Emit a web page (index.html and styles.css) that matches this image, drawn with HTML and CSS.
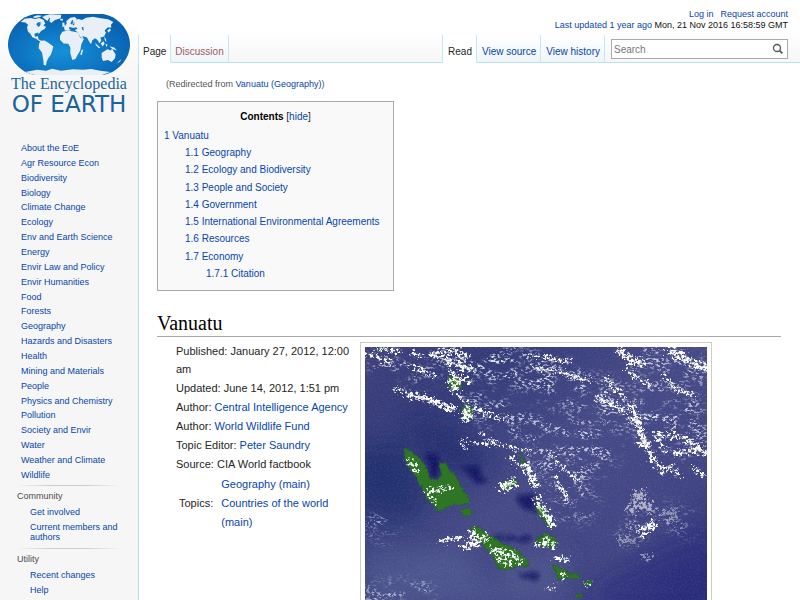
FILE: index.html
```
<!DOCTYPE html>
<html lang="en">
<head>
    <meta charset="UTF-8">
    <title>Vanuatu - The Encyclopedia of Earth</title>
    <link rel="stylesheet" href="styles.css">
</head>
<body>

<div class="page">

    <aside class="sidebar">
        <a class="logo" href="#">
            <svg class="globe" viewBox="24 42 366 182" preserveAspectRatio="none" aria-hidden="true">
                <defs>
                    <radialGradient id="sea" cx="45%" cy="62%" r="60%">
                        <stop offset="0" stop-color="#1591d8"/>
                        <stop offset="1" stop-color="#0862b2"/>
                    </radialGradient>
                    <clipPath id="globeShape">
                        <path d="M105 42H308C350 47 390 88 390 133S350 219 308 224H105C64 219 24 178 24 133S64 47 105 42Z"/>
                    </clipPath>
                </defs>
                <g clip-path="url(#globeShape)">
                    <rect x="24" y="42" width="366" height="182" fill="url(#sea)"/>
                    <g fill="#e9eff6">
                        <path d="M62 66L74 56 92 54 105 57 118 54 131 60 136 70 130 76 138 80 134 87 124 92 116 102 114 97 103 101 105 110 113 108 116 118 124 122 119 123 108 116 97 111 91 101 84 94 81 82 84 74 76 67Z"/>
                        <path d="M98 51L112 46 126 47 118 52 104 54ZM126 50L140 47 148 54 142 63 134 57Z"/>
                        <path d="M130 48L150 43 184 44 182 55 165 60 154 69 148 64 150 54Z"/>
                        <path d="M121 122L134 121 147 129 160 139 157 151 152 164 145 173 140 184 138 196 131 194 130 180 126 157 116 144 117 132Z"/>
                        <path d="M192 81L200 71 199 63 211 53 224 51 231 57 224 66 217 75 226 76 226 83 216 83 209 80 207 87 214 90 205 92 194 91Z"/>
                        <path d="M187 95L204 91 219 94 234 97 241 113 252 116 244 132 241 150 234 162 226 176 217 179 211 159 211 142 205 131 191 130 180 119 180 107Z"/>
                        <path d="M224 61L235 57 246 60 258 53 279 50 298 54 324 58 340 66 333 74 334 82 323 82 314 91 318 98 312 109 301 112 304 121 298 129 292 119 285 114 277 120 273 132 266 122 261 112 247 108 250 116 242 111 232 96 225 91 231 84 222 79Z"/>
                        <path d="M305 158L316 151 323 147 332 151 336 146 347 163 345 174 335 185 324 179 309 182 305 172Z"/>
                        <path d="M285 128L293 135 301 143 297 144 289 137ZM302 130L310 123 314 130 308 139ZM317 132L323 132 319 141ZM328 138L342 142 351 150 338 147ZM313 108L318 118 319 126 314 119ZM322 91L329 85 333 90 325 98ZM353 187L364 176 360 184 348 191ZM244 151L250 147 245 165 241 163ZM187 67L193 68 195 80 187 80ZM180 57L189 56 188 62 181 61Z"/>
                        <path d="M75 215L112 208 139 211 156 205 183 211 219 207 249 208 274 206 301 211 331 215 304 225H104Z"/>
                    </g>
                    <g fill="#1779c5">
                        <path d="M111 68L122 66 121 76 116 81 109 74ZM215 62L219 59 220 69 214 73 211 70ZM221 84L230 83 233 87 223 88ZM245 82L250 80 251 91 247 90Z"/>
                    </g>
                </g>
            </svg>
            <span class="logo-top">The Encyclopedia</span>
            <span class="logo-bottom">OF EARTH</span>
        </a>

        <nav>
            <ul class="nav-main">
                <li><a href="#">About the EoE</a></li>
                <li><a href="#">Agr Resource Econ</a></li>
                <li><a href="#">Biodiversity</a></li>
                <li><a href="#">Biology</a></li>
                <li><a href="#">Climate Change</a></li>
                <li><a href="#">Ecology</a></li>
                <li><a href="#">Env and Earth Science</a></li>
                <li><a href="#">Energy</a></li>
                <li><a href="#">Envir Law and Policy</a></li>
                <li><a href="#">Envir Humanities</a></li>
                <li><a href="#">Food</a></li>
                <li><a href="#">Forests</a></li>
                <li><a href="#">Geography</a></li>
                <li><a href="#">Hazards and Disasters</a></li>
                <li><a href="#">Health</a></li>
                <li><a href="#">Mining and Materials</a></li>
                <li><a href="#">People</a></li>
                <li><a href="#">Physics and Chemistry</a></li>
                <li><a href="#">Pollution</a></li>
                <li><a href="#">Society and Envir</a></li>
                <li><a href="#">Water</a></li>
                <li><a href="#">Weather and Climate</a></li>
                <li><a href="#">Wildlife</a></li>
            </ul>

            <div class="portal">
                <h3>Community</h3>
                <ul>
                    <li><a href="#">Get involved</a></li>
                    <li><a href="#">Current members and authors</a></li>
                </ul>
            </div>

            <div class="portal">
                <h3>Utility</h3>
                <ul>
                    <li><a href="#">Recent changes</a></li>
                    <li><a href="#">Help</a></li>
                </ul>
            </div>
        </nav>
    </aside>

    <div class="main">
        <header class="header">
            <div class="personal">
                <div class="account"><a href="#">Log in</a><a href="#">Request account</a></div>
                <div><a href="#">Last updated 1 year ago</a> Mon, 21 Nov 2016 16:58:59 GMT</div>
            </div>
            <div class="toolbar">
                <nav class="tabs">
                    <a class="tab selected" href="#">Page</a>
                    <a class="tab new" href="#">Discussion</a>
                </nav>
                <nav class="tabs tabs-right">
                    <a class="tab selected" href="#">Read</a>
                    <a class="tab" href="#">View source</a>
                    <a class="tab" href="#">View history</a>
                </nav>
                <form class="search">
                    <input type="search" placeholder="Search" aria-label="Search">
                    <button type="button" aria-label="Go">
                        <svg viewBox="0 0 12 12" width="12" height="12" fill="none" stroke="#555">
                            <circle cx="5" cy="5" r="3.5" stroke-width="1.3"/>
                            <path d="M7.6 7.6L10.4 10.4" stroke-width="1.8"/>
                        </svg>
                    </button>
                </form>
            </div>
        </header>

        <main class="content">
            <p class="redirected">(Redirected from <a href="#">Vanuatu (Geography)</a>)</p>

            <div class="toc">
                <div class="toc-title"><strong>Contents</strong> [<a href="#">hide</a>]</div>
                <a href="#vanuatu">1 Vanuatu</a>
                <ul>
                    <li><a href="#">1.1 Geography</a></li>
                    <li><a href="#">1.2 Ecology and Biodiversity</a></li>
                    <li><a href="#">1.3 People and Society</a></li>
                    <li><a href="#">1.4 Government</a></li>
                    <li><a href="#">1.5 International Environmental Agreements</a></li>
                    <li><a href="#">1.6 Resources</a></li>
                    <li><a href="#">1.7 Economy</a></li>
                    <li class="sub"><a href="#">1.7.1 Citation</a></li>
                </ul>
            </div>

            <h1 id="vanuatu">Vanuatu</h1>

            <div class="article">
                <div class="meta">
                    <div>Published: January 27, 2012, 12:00 am</div>
                    <div>Updated: June 14, 2012, 1:51 pm</div>
                    <div>Author: <a href="#">Central Intelligence Agency</a></div>
                    <div>Author: <a href="#">World Wildlife Fund</a></div>
                    <div>Topic Editor: <a href="#">Peter Saundry</a></div>
                    <div>Source: CIA World factbook</div>
                    <div class="topics">
                        <span>Topics:</span>
                        <div>
                            <a href="#">Geography (main)</a><br>
                            <a href="#">Countries of the world (main)</a>
                        </div>
                    </div>
                </div>

                <div class="photo">
                    <svg viewBox="30 33 1026 762" preserveAspectRatio="xMidYMin slice" role="img" aria-label="Satellite view of Vanuatu">
                        <defs>
                            <linearGradient id="ocean" x1="0" y1="0.1" x2="1" y2="0.9">
                                <stop offset="0" stop-color="#3c3f7b"/>
                                <stop offset="0.2" stop-color="#333b78"/>
                                <stop offset="0.5" stop-color="#464a86"/>
                                <stop offset="0.8" stop-color="#414583"/>
                                <stop offset="1" stop-color="#2c2f7b"/>
                            </linearGradient>
                            <filter id="soft" x="-50%" y="-50%" width="200%" height="200%">
                                <feGaussianBlur stdDeviation="30"/>
                            </filter>
                            <filter id="smudge" x="-50%" y="-50%" width="200%" height="200%">
                                <feTurbulence type="fractalNoise" baseFrequency="0.04" numOctaves="3" seed="9"/>
                                <feDisplacementMap in="SourceGraphic" scale="30" xChannelSelector="R" yChannelSelector="G" result="d"/>
                                <feGaussianBlur in="d" stdDeviation="7"/>
                            </filter>
                            <filter id="rough" x="-20%" y="-20%" width="140%" height="140%">
                                <feTurbulence type="fractalNoise" baseFrequency="0.08" numOctaves="3" seed="4" result="n"/>
                                <feDisplacementMap in="SourceGraphic" in2="n" scale="14" xChannelSelector="R" yChannelSelector="G"/>
                            </filter>
                            <!-- breaks the cloud shapes up into small flecks -->
                            <filter id="cloud" filterUnits="userSpaceOnUse" x="0" y="0" width="1100" height="820" color-interpolation-filters="sRGB">
                                <feTurbulence type="fractalNoise" baseFrequency="0.11" numOctaves="4" seed="12" result="n"/>
                                <feColorMatrix in="n" values="0 0 0 0 1  0 0 0 0 1  0 0 0 0 1  6 0 0 0 -2.3" result="holes"/>
                                <feDisplacementMap in="SourceGraphic" in2="n" scale="40" xChannelSelector="G" yChannelSelector="B" result="d"/>
                                <feComposite in="d" in2="holes" operator="in"/>
                            </filter>
                            <filter id="spray" filterUnits="userSpaceOnUse" x="0" y="0" width="1100" height="820" color-interpolation-filters="sRGB">
                                <feTurbulence type="fractalNoise" baseFrequency="0.09 0.15" numOctaves="5" seed="31" result="n"/>
                                <feColorMatrix in="n" values="0 0 0 0 1  0 0 0 0 1  0 0 0 0 1  6 0 0 0 -3" result="holes"/>
                                <feTurbulence type="fractalNoise" baseFrequency="0.015 0.03" numOctaves="2" seed="8" result="big"/>
                                <feColorMatrix in="big" values="0 0 0 0 1  0 0 0 0 1  0 0 0 0 1  6 0 0 0 -2.5" result="patches"/>
                                <feGaussianBlur in="SourceGraphic" stdDeviation="20" result="b"/>
                                <feComposite in="b" in2="holes" operator="in" result="c"/>
                                <feComposite in="c" in2="patches" operator="in"/>
                            </filter>
                            <filter id="grain" filterUnits="userSpaceOnUse" x="0" y="0" width="1100" height="820">
                                <feTurbulence type="fractalNoise" baseFrequency="0.2" numOctaves="2" seed="5"/>
                                <feColorMatrix values="0 0 0 0 0.6  0 0 0 0 0.62  0 0 0 0 0.85  2 0 0 0 -0.9"/>
                            </filter>
                        </defs>

                        <rect x="30" y="33" width="1026" height="762" fill="url(#ocean)"/>
                        <g filter="url(#soft)">
                            <path d="M0 340L150 335 220 480 160 560 0 520Z" fill="#15246a" opacity="0.55"/>
                            <path d="M160 250L330 290 420 400 300 420 220 380Z" fill="#20286d" opacity="0.6"/>
                            <path d="M30 640L320 640 430 795 30 795Z" fill="#57669b" opacity="0.4"/>
                            <path d="M440 680L640 640 620 795 430 795Z" fill="#566094" opacity="0.5"/>
                            <path d="M740 740L1056 600V795H700Z" fill="#22247a" opacity="0.4"/>
                        </g>
                        <g fill="#0b0e5d" opacity="0.75" filter="url(#smudge)">
                            <path d="M205 350L255 355 250 385 258 420 228 428Z"/>
                            <path d="M318 390L365 385 388 440 350 430Z"/>
                            <path d="M480 480L535 470 545 525 505 520Z"/>
                            <path d="M400 600L530 602 530 615 430 612ZM490 712L560 712 550 725 495 725Z"/>
                        </g>
                        <rect x="30" y="33" width="1026" height="762" filter="url(#grain)" opacity="0.12"/>

                        <!-- islands -->
                        <g fill="#2f7426" stroke="#2b5d3a" stroke-width="3" filter="url(#rough)">
                            <path d="M149 336L166 343 190 362 212 391 221 424 245 433 260 421 254 380 272 378 283 404 301 417 318 452 340 482 345 501 320 508 300 504 260 521 247 528 238 510 211 484 205 458 187 430 163 396 150 372Z"/>
                            <path d="M312 526L336 514 351 526 346 539 322 538Z"/>
                            <path d="M345 574L372 571 402 597 439 621 481 640 518 673 523 690 488 690 456 702 432 699 408 650 371 617Z"/>
                            <path d="M280 122L310 125 320 150 300 165 282 145ZM320 214L350 210 355 235 335 255Z"/>
                            <path d="M433 445L480 428 485 442 457 463ZM490 348L508 374 517 406 507 395ZM65 38L88 36 85 46Z"/>
                            <path d="M540 490L556 505 597 570 580 572 548 530ZM543 607L578 592 612 620 600 636 555 629Z"/>
                            <path d="M592 687L622 697 642 713 672 714 674 729 625 727 610 731ZM690 736L708 735 712 747 690 748ZM660 779L680 771 677 781 665 786Z"/>
                        </g>

                        <g stroke="#dfe2f0" fill="none" stroke-width="110" filter="url(#spray)">
                            <path d="M260 60Q400 60 600 130T1050 330"/>
                            <path d="M350 170Q450 260 560 280T780 290" opacity="0.8"/>
                            <path d="M540 350Q680 400 760 330M620 380L680 550" opacity="0.9"/>
                            <path d="M840 50Q930 80 1050 120M850 180L1040 240" opacity="0.8"/>
                            <path d="M20 780L230 770M40 60L240 120" opacity="0.8" stroke-width="70"/>
                            <path d="M800 610L900 530L1020 570M40 550L110 600" opacity="0.8" stroke-width="60"/>
                        </g>

                        <g stroke="#fff" fill="none" stroke-width="11" filter="url(#cloud)">
                            <path d="M35 50L80 72 110 82M60 38L140 46M170 50L205 62M165 88L245 120"/>
                            <path d="M225 50L290 78 355 105M255 38L345 62" stroke-width="15"/>
                            <path d="M280 105L350 140M310 175L340 210 460 255M115 158L150 168"/>
                            <path d="M150 172L210 188 300 222" stroke-width="19"/>
                            <path d="M315 315L430 325 530 350M310 322L340 342M370 292L430 325" stroke-width="7"/>
                            <path d="M295 125L300 165M335 220L333 255" stroke-width="32"/>
                            <path d="M435 458L482 438" stroke-width="27"/>
                            <path d="M510 380L545 455M541 480L598 574" stroke-width="21"/>
                            <path d="M460 360L510 400M530 95L600 103 710 138M515 55L650 80" stroke-width="8"/>
                            <path d="M600 420L640 490M580 350L630 400 680 440" stroke-width="8"/>
                            <path d="M790 38L825 72 870 76M940 42L1000 70 1060 98" stroke-width="24"/>
                            <path d="M815 95L840 125 890 150M920 115L960 155 1015 182M750 125L810 185"/>
                            <path d="M825 200L850 260 865 315 895 370 920 405 950 390" stroke-width="17"/>
                            <path d="M845 320L890 325M895 295L970 300 1050 350M955 355L1025 340 1056 350" stroke-width="14"/>
                            <path d="M720 185L780 205 840 260M905 300L935 350M950 390L975 425M1010 395L1056 420"/>
                            <path d="M850 595L900 560" stroke-width="27"/>
                            <path d="M825 530L840 500 890 515M835 475L875 480" stroke="#b3b3c8" stroke-width="34"/>
                            <path d="M790 615L840 610M865 655L885 670M935 525L965 545" stroke="#9397b7" stroke-width="22"/>
                            <path d="M245 617L325 605" stroke-width="9"/>
                            <path d="M345 582L365 632M320 638L400 600" stroke-width="21"/>
                            <path d="M405 640L470 655 500 685M425 665L470 685" stroke-width="17"/>
                            <path d="M215 468L288 455M230 490L246 500M157 365L188 410" stroke-width="14"/>
                            <path d="M540 627L605 625M570 605L580 622" stroke-width="17"/>
                            <path d="M595 665L640 670M575 755L602 758M615 710L630 723M690 740L705 744"/>
                        </g>
                        <g fill="none" stroke="#fff" stroke-linecap="round" stroke-width="3" filter="url(#rough)">
                            <path d="M248 617L278 610 322 604M230 55L300 84 352 98M170 178L240 197 300 221M322 226L350 244M330 248L343 233"/>
                            <path d="M832 212L855 280 862 315 890 365M845 322L875 324M795 45L820 74 860 78M950 55L1020 85 1055 97"/>
                            <path d="M545 498L588 570M512 385L533 438M600 440L642 492M535 95L600 105 705 134M598 666L636 669"/>
                        </g>
                    </svg>
                </div>
            </div>
        </main>
    </div>
</div>

</body>
</html>
```

FILE: styles.css
```
* {
    box-sizing: border-box;
}

body {
    font-family: "Liberation Sans", Arial, sans-serif;
    margin: 0;
    font-size: 11px;
    color: #252525;
    background-color: #fff;
}

a {
    color: #0645ad;
    text-decoration: none;
}

.content a:hover, .sidebar li a:hover {
    text-decoration: underline;
}

ul {
    list-style: none;
    margin: 0;
    padding: 0;
}

.page {
    display: grid;
    grid-template-columns: 138px 1fr;
    min-height: 100vh;
    background: linear-gradient(#fff 20px, #f6f6f6 80px);
}

/* sidebar */
.sidebar {
    font-size: 9px;
    line-height: 10px;
}

.logo {
    display: flex;
    flex-direction: column;
    align-items: center;
    padding: 14px 8px 0;
    color: #19649f;
}

.globe {
    display: block;
    width: 100%;
    height: 61px;
}

.logo-top {
    font-family: "Liberation Serif", serif;
    font-size: 16px;
    line-height: 18px;
    white-space: nowrap;
}

.logo-bottom {
    font-family: "DejaVu Sans", sans-serif;
    font-size: 23px;
    line-height: 22px;
    white-space: nowrap;
}

.nav-main {
    display: flex;
    flex-direction: column;
    justify-content: space-between;
    height: 337px;
    margin: 28px 0 5px;
    padding-left: 21px;
}

.portal {
    padding: 6px 10px 1px 17px;
    background: linear-gradient(to right, transparent, #ccc 33%, #ccc 66%, transparent) 17px 0 / 103px 1px no-repeat;
}

.portal h3 {
    margin: 0 0 6px;
    font-size: 9px;
    font-weight: normal;
    color: #4d4d4d;
}

.portal li {
    padding-left: 13px;
    margin-bottom: 5px;
}

/* header */
.main {
    display: flex;
    flex-direction: column;
    min-width: 0;
}

.header {
    display: flex;
    flex-direction: column;
    justify-content: space-between;
    height: 63px;
    padding-top: 9px;
    background: linear-gradient(#fff 30px, #f6f6f6);
    border-bottom: 1px solid #b9e2ee;
}

.personal {
    padding-right: 12px;
    text-align: right;
    font-size: 9px;
    line-height: 11px;
    color: #111;
}

.account a {
    margin-left: 7px;
}

.toolbar {
    display: flex;
    align-items: flex-end;
    margin-bottom: -1px;
}

.tabs {
    display: flex;
    border-left: 1px solid #c5e7f1;
}

.tabs-right {
    margin-left: auto;
}

.tab {
    height: 28px;
    padding: 10px 4px 0;
    font-size: 10px;
    line-height: 14px;
    border-right: 1px solid #c5e7f1;
    border-bottom: 1px solid #b9e2ee;
    background: linear-gradient(#fff, #eef5fa);
}

.tabs-right .tab {
    padding-left: 5px;
}

.tab.selected {
    color: #252525;
    background: #fff;
    border-bottom-color: #fff;
}

.tab.new {
    color: #a55858;
}

.search {
    display: flex;
    width: 177px;
    height: 20px;
    margin: 0 12px 4px 6px;
    border: 1px solid #aaa;
    background: #fff;
}

.search input {
    flex: 1;
    min-width: 0;
    padding: 0 2px;
    border: none;
    outline: none;
    background: none;
    font-family: inherit;
    font-size: 10px;
}

.search input::placeholder {
    color: #777;
}

.search button {
    display: flex;
    align-items: center;
    padding: 0 3px;
    border: none;
    background: none;
    cursor: pointer;
}

/* content */
.content {
    flex: 1;
    padding: 15px 19px 0 18px;
    background: #fff;
    border-left: 1px solid #b9e2ee;
}

.redirected {
    margin: 0 0 11px 9px;
    font-size: 9px;
    line-height: 12px;
    color: #545454;
}

.toc {
    width: fit-content;
    min-width: 237px;
    padding: 6px 6px 8px;
    font-size: 10px;
    line-height: 17px;
    border: 1px solid #aaa;
    background: #f9f9f9;
}

.toc-title {
    margin-bottom: 2px;
    text-align: center;
}

.toc-title strong {
    color: #000;
}

.toc ul {
    display: flex;
    flex-direction: column;
    justify-content: space-between;
    height: 138px;
    padding-left: 21px;
}

.toc .sub {
    padding-left: 21px;
}

h1 {
    margin: 20px 0 0;
    padding-bottom: 1px;
    font-family: "Liberation Serif", serif;
    font-size: 20px;
    line-height: 24px;
    font-weight: normal;
    color: #000;
    border-bottom: 1px solid #aaa;
}

.article {
    display: flex;
    gap: 5px;
    padding-top: 5px;
}

.meta {
    display: flex;
    flex-direction: column;
    gap: 1px;
    flex: 0 0 198px;
    padding-left: 19px;
    line-height: 18px;
}

.topics {
    display: flex;
    align-items: center;
    gap: 8px;
    padding: 1px 0 0 3px;
    line-height: 19px;
}

.photo {
    flex: 0 1 352px;
    padding: 4px 4px 0;
    border: 1px solid #ccc;
    border-bottom: none;
}

.photo svg {
    display: block;
    width: 100%;
    height: 253px;
}
```
